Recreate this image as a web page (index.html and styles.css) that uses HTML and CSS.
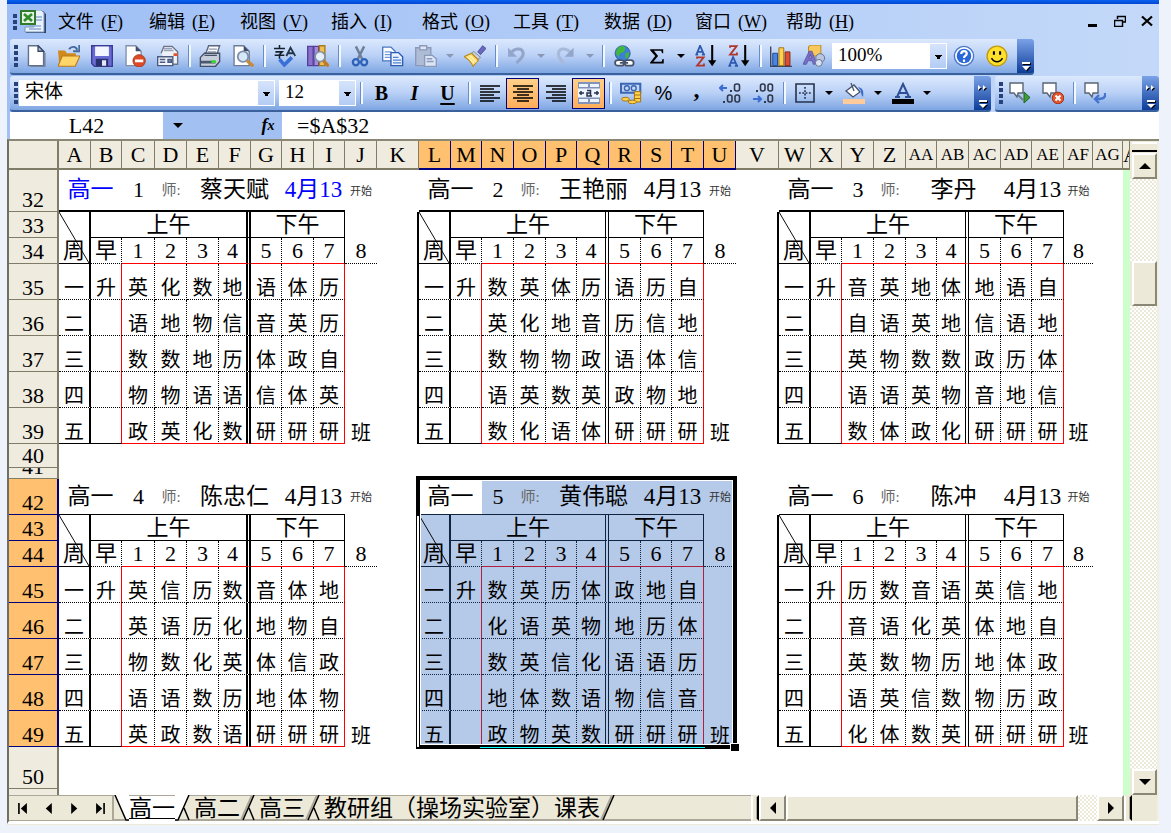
FILE: index.html
```html
<!DOCTYPE html>
<html lang="zh-CN">
<head>
<meta charset="utf-8">
<title>课表</title>
<link rel="stylesheet" href="styles.css">
</head>
<body>
<div class="window">
  <div class="title-edge"></div>

  <header class="menubar">
    <span class="grip"></span>
    <svg class="app-icon" viewBox="0 0 26 24"><path d="M16 1h7l3 3v19H6v-5h10z" fill="#2c4468"/><path d="M14 0h7l3 3v19H5v-5h9z" fill="#e9f1fc" stroke="#7d97bd"/><path d="M15 7h7M15 10h7M9 16h12M9 19h12" stroke="#8fa9d0" stroke-width="1.5"/><path d="M1 1h14v13H1z" fill="#e6f2e2" stroke="#2f7a2b" stroke-width="2"/><path d="M4 4l8 7M12 4l-8 7" stroke="#2f8a2b" stroke-width="2.6"/></svg>
    <nav class="menus">
      <button>文件<span>(<u>F</u>)</span></button><button>编辑<span>(<u>E</u>)</span></button><button>视图<span>(<u>V</u>)</span></button><button>插入<span>(<u>I</u>)</span></button><button>格式<span>(<u>O</u>)</span></button><button>工具<span>(<u>T</u>)</span></button><button>数据<span>(<u>D</u>)</span></button><button>窗口<span>(<u>W</u>)</span></button><button>帮助<span>(<u>H</u>)</span></button>
    </nav>
    <div class="win-buttons">
      <button aria-label="最小化"><svg viewBox="0 0 12 12"><path d="M1 9h9v3H1z"/></svg></button>
      <button aria-label="还原"><svg viewBox="0 0 12 12"><path d="M3.500 4V1.500h8V7H9M3 1.500h9M.5 5.500h8v6h-8zM0 5.500h9" fill="none" stroke="#000" stroke-width="1.500"/></svg></button>
      <button aria-label="关闭"><svg viewBox="0 0 12 12"><path d="M1 1.500l10 9M11 1.500l-10 9" stroke="#000" stroke-width="2.200"/></svg></button>
    </div>
  </header>

  <div class="bars">
    <div class="toolbar standard">
      <span class="grip"></span>
      <button aria-label="新建"><svg viewBox="0 0 16 16"><path d="M4 2h7l4 4v10H4z" fill="#7d8aa3"/><path d="M2.500.5h7l4 4v10.500h-11z" fill="#fff" stroke="#5f6f8c"/><path d="M9.500.5v4h4z" fill="#b9c6dc" stroke="#3a4a68"/></svg></button>
      <button aria-label="打开"><svg viewBox="0 0 16 16"><path d="M0 4h5l1.500 2H13v9H1z" fill="#d08a1c"/><path d="M3 8h13l-3.500 7.500H0z" fill="#ffd568" stroke="#b9791a" stroke-width=".8"/><path d="M8 3c2-2.500 5-2 6 .5M15.500 0v4.500H11" fill="none" stroke="#456a9e" stroke-width="1.400"/></svg></button>
      <button aria-label="保存"><svg viewBox="0 0 16 16"><path d="M.5.5h15v15h-13l-2-2z" fill="#6a6ad4" stroke="#3b3a94"/><path d="M3 1h10v7H3z" fill="#f3f5ff"/><path d="M3.500 10h9v5.500h-9z" fill="#28306e"/><path d="M8 11h3v4H8z" fill="#e4e8f8"/></svg></button>
      <button aria-label="权限"><svg viewBox="0 0 16 16"><path d="M1.500.5h7l4 4V15h-11z" fill="#fff" stroke="#8090ac"/><path d="M8.500.5v4h4z" fill="#3c4c6c"/><circle cx="11" cy="11.500" r="4.500" fill="#dc4a26" stroke="#a43218" stroke-width=".6"/><path d="M8 10.500h6v2H8z" fill="#fff"/></svg></button>
      <button aria-label="邮件"><svg viewBox="0 0 16 16"><path d="M3 6l2-5h6l4 4v9H8" fill="#eef1f7" stroke="#6b7488"/><path d="M5 4h7M5 2.500h6" stroke="#98a2b8"/><path d="M12 6h3v2h-3z" fill="#e2552c"/><path d="M.5 8.500h11v6.500H.5z" fill="#f2f5fc" stroke="#4a5a80"/><path d="M2 10.500h4M2 12.500h4M8 10.500h2.500v2H8z" stroke="#4a5a80" fill="#7c94c8"/></svg></button>
      <i class="sep"></i>
      <button aria-label="打印"><svg viewBox="0 0 16 16"><path d="M5 6l2-5.500h8L13 7z" fill="#fff" stroke="#5a6580"/><path d="M7 3h6M6.500 5h6" stroke="#8a94ac"/><path d="M1 9l3-3h11v6l-3 3.500H1z" fill="#c7cfdd" stroke="#454f66"/><path d="M1 11.500h11v2H1z" fill="#4c5870"/><path d="M9 11h3v2H9z" fill="#2fe01e"/><path d="M4 7.500h9" stroke="#454f66"/></svg></button>
      <button aria-label="打印预览"><svg viewBox="0 0 16 16"><path d="M1.500.5h7l4 4V15h-11z" fill="#fff" stroke="#6d7c98"/><path d="M8.500.5v4h4z" fill="#3c4c6c"/><circle cx="8" cy="8.500" r="3.800" fill="#d5e8f8" stroke="#7f8ea8" stroke-width="1.300"/><path d="M11 11.500l4.500 4" stroke="#c58a3a" stroke-width="2.400"/></svg></button>
      <i class="sep"></i>
      <button aria-label="拼写检查"><svg viewBox="0 0 16 16"><path d="M0 2.500h8M4 0v2M1 5h5L4 7v3M.5 7.500h7" fill="none" stroke="#14202e" stroke-width="1.100"/><path d="M9 8l3-6 3.500 6M10 6h4.500" fill="none" stroke="#24344a" stroke-width="1.300"/><path d="M4 10.500l3.500 4L13 9" fill="none" stroke="#3b6fd8" stroke-width="2.600"/></svg></button>
      <button aria-label="信息检索"><svg viewBox="0 0 16 16"><path d="M.5 1h4v14h-4z" fill="#8a72cc" stroke="#54409a"/><path d="M5 1h3.500v14H5z" fill="#a48ae0" stroke="#54409a"/><path d="M9 .5h4V15H9z" fill="#f0c050" stroke="#a87a1c"/><circle cx="9.500" cy="8.500" r="3.600" fill="#e5f0fa" stroke="#8290a6" stroke-width="1.200"/><path d="M12 11.500l3.800 4" stroke="#c27a28" stroke-width="2.400"/></svg></button>
      <i class="sep"></i>
      <button aria-label="剪切"><svg viewBox="0 0 16 16"><path d="M5 1l4.500 9M11 1l-4.500 9" stroke="#6f7f98" stroke-width="1.800"/><circle cx="5" cy="12.500" r="2.200" fill="none" stroke="#2f62b8" stroke-width="1.700"/><circle cx="11" cy="12.500" r="2.200" fill="none" stroke="#2f62b8" stroke-width="1.700"/></svg></button>
      <button aria-label="复制"><svg viewBox="0 0 16 16"><path d="M.5 1.500h6l3 3v7h-9z" fill="#fff" stroke="#4a78c4"/><path d="M2 5h5M2 7h5M2 9h5" stroke="#6f98dc"/><path d="M6.500 5.500h5.500l3 3V15H6.500z" fill="#eaf2ff" stroke="#2c5cb0"/><path d="M8 9h4M8 11h6M8 13h6" stroke="#4f7fd0"/></svg></button>
      <button aria-label="粘贴" disabled><svg viewBox="0 0 16 16"><path d="M.5 2h11v13H.5z" fill="#aebcd6" stroke="#8c9aba"/><path d="M3.500.5h5v3h-5z" fill="#dfe6f3" stroke="#8c9aba"/><path d="M7 7.500h5.500l3 2.500v5.500H7z" fill="#dbe4f4" stroke="#8c9aba"/><path d="M8.500 10h4M8.500 12h5" stroke="#8c9aba"/></svg></button>
      <button class="drop dim" aria-label="粘贴选项"></button>
      <button aria-label="格式刷"><svg viewBox="0 0 16 16"><path d="M10 5l3.500-4.500L16 2.500 12 7z" fill="#6a68c0" stroke="#4a4890" stroke-width=".6"/><path d="M7 4.500l5 4.500-2 1.500-4.500-4z" fill="#c8cede" stroke="#7a8298" stroke-width=".6"/><path d="M5.500 6l5 5-4 4.500C5 12 3 10 0 8.500z" fill="#ffd968" stroke="#b88a20" stroke-width=".8"/><path d="M2.500 8.500l5 5M4 7.500l5 5" stroke="#fff3b0"/></svg></button>
      <i class="sep"></i>
      <button aria-label="撤消" disabled><svg viewBox="0 0 16 16"><path d="M3 6.500C6 2 12 1.500 12.500 6c.2 3-2.500 5-5 7" fill="none" stroke="#93a5cb" stroke-width="2.200"/><path d="M1.500 2v6.500H8z" fill="#93a5cb"/></svg></button>
      <button class="drop dim" aria-label="撤消选项"></button>
      <button aria-label="恢复" disabled><svg viewBox="0 0 16 16"><path d="M12 6.500C9 2 3 1.500 2.500 6c-.2 3 1.500 5 4 7" fill="none" stroke="#a9b9da" stroke-width="2.200"/><path d="M13.500 2v6.500H7z" fill="#93a5cb"/></svg></button>
      <button class="drop dim" aria-label="恢复选项"></button>
      <i class="sep"></i>
      <button aria-label="超链接"><svg viewBox="0 0 16 16"><circle cx="7" cy="6" r="5.500" fill="#3d7fd6" stroke="#2a5aa4" stroke-width=".6"/><path d="M3 3c2-3 5-2.500 6-1l-1 3-3 1-1 3-2-3zM9 6l3-1-1 4-2 1z" fill="#42b83a"/><rect x="1.500" y="11" width="6.500" height="4" rx="2" fill="#fff" stroke="#47536c" stroke-width="1.300"/><rect x="8.500" y="11" width="6.500" height="4" rx="2" fill="#fff" stroke="#47536c" stroke-width="1.300"/><path d="M5 13h6" stroke="#47536c" stroke-width="1.400"/></svg></button>
      <button aria-label="自动求和"><svg viewBox="0 0 16 16"><path d="M3 3h9.500v3h-.8L11 4.200H5.800L8.800 8l-3.500 4.200h6l.8-2h.8V13.500H3v-.8L6.700 8 3 3.800z" fill="#000"/></svg></button>
      <button class="drop" aria-label="求和选项"></button>
      <button aria-label="升序"><svg viewBox="0 0 16 16"><path d="M1 7l2.700-6.500L6.500 7M2 5h3.500M.3 7h2M5 7h2.300" fill="none" stroke="#2f58ae" stroke-width="1.300"/><path d="M1.500 10V9h4.800L1.500 15h5v-1.500" fill="none" stroke="#b0362c" stroke-width="1.300"/><path d="M12.500 0v14" stroke="#000" stroke-width="1.500"/><path d="M9.500 11h6l-3 4.500z"/></svg></button>
      <button aria-label="降序"><svg viewBox="0 0 16 16"><path d="M1.500 2V.8h4.800L1.500 7h5V5.500" fill="none" stroke="#b0362c" stroke-width="1.300"/><path d="M1 15.200l2.700-6.500 2.800 6.500M2 13h3.500M.3 15.200h2M5 15.200h2.300" fill="none" stroke="#2f58ae" stroke-width="1.300"/><path d="M12.500 0v14" stroke="#000" stroke-width="1.500"/><path d="M9.500 11h6l-3 4.500z"/></svg></button>
      <i class="sep"></i>
      <button aria-label="图表向导"><svg viewBox="0 0 16 16"><path d="M.5 1v14.500H16" fill="none" stroke="#3c4660"/><path d="M2 6h3.500v9H2z" fill="#4a86e0" stroke="#1d4890" stroke-width=".7"/><path d="M6.500 2H10v13H6.500z" fill="#ffcf50" stroke="#a27410" stroke-width=".7"/><path d="M11 5h3.500v10H11z" fill="#dc5030" stroke="#8c2410" stroke-width=".7"/></svg></button>
      <button aria-label="绘图"><svg viewBox="0 0 16 16"><path d="M4 1l2-1h7v7l-2 1H4z" fill="#f8c85c" stroke="#b88424" stroke-width=".7"/><path d="M0 14L4.500 4.500h2L10 14H7.500l-.8-2.500H3.500L2.500 14zM4.300 9.500h2l-1-2.500z" fill="#7a70c8" stroke="#4c4494" stroke-width=".5"/><circle cx="12.500" cy="9.500" r="3.200" fill="#b9c6de" stroke="#66748e" stroke-width=".7"/><circle cx="11.500" cy="13" r="2.500" fill="#d8e2f2" stroke="#66748e" stroke-width=".7"/></svg></button>
      <select class="combo zoom" aria-label="显示比例"><option>100%</option></select>
      <button aria-label="帮助"><svg viewBox="0 0 16 16"><circle cx="8" cy="8" r="7" fill="#fff" stroke="#4a78c8"/><circle cx="8" cy="8" r="5.300" fill="#2a68d8"/><path d="M6 6.500C6 3.800 10 4 10 6.300 10 7.800 8 7.600 8 9.500M8 10.500v1.800" fill="none" stroke="#fff" stroke-width="1.600"/></svg></button>
      <button aria-label="笑脸"><svg viewBox="0 0 16 16"><circle cx="8" cy="8" r="7.200" fill="#ffe02a" stroke="#c49a10"/><path d="M5 4.500h1.500v2.500H5zM9.500 4.500H11v2.500H9.500z"/><path d="M4 9.500c2 3.500 6 3.500 8 0" fill="none" stroke="#000" stroke-width="1.100"/></svg></button>
      <button class="cap" aria-label="工具栏选项"><svg viewBox="0 0 10 10"><path d="M1 1h8v2H1zM1 5h8L5 9.500z"/></svg></button>
    </div>

    <div class="row2">
      <div class="toolbar format">
        <span class="grip"></span>
        <select class="combo font" aria-label="字体"><option>宋体</option></select>
        <select class="combo size" aria-label="字号"><option>12</option></select>
        <i class="sep"></i>
        <button class="letter b">B</button><button class="letter i">I</button><button class="letter u">U</button>
        <i class="sep"></i>
        <button aria-label="左对齐"><svg viewBox="0 0 22 22"><path d="M1 4h20M1 7h14M1 10h20M1 13h14M1 16h20M1 19h14" stroke="#000" stroke-width="1.500"/></svg></button>
        <button class="on" aria-label="居中"><svg viewBox="0 0 22 22"><path d="M1 4h20M5 7h12M1 10h20M5 13h12M1 16h20M5 19h12" stroke="#000" stroke-width="1.500"/></svg></button>
        <button aria-label="右对齐"><svg viewBox="0 0 22 22"><path d="M1 4h20M7 7h14M1 10h20M7 13h14M1 16h20M7 19h14" stroke="#000" stroke-width="1.500"/></svg></button>
        <button class="on" aria-label="合并及居中"><svg viewBox="0 0 22 22"><path d="M0 0h22v22H0z" fill="#8193b8"/><path d="M1 2h9v3H1zM12 2h9v3h-9zM1 17h9v3H1zM12 17h9v3h-9zM0 6.500h22v9H0z" fill="#eef4ff"/><path d="M1 11h5M3 9v4M16 11h5M19 9v4M9 8.500h3.500V14M12.500 11H9v3h5" fill="none" stroke="#26324c" stroke-width="1.500"/></svg></button>
        <i class="sep"></i>
        <button aria-label="货币样式"><svg viewBox="0 0 16 16"><path d="M0 .5h15.500v8H0z" fill="#3b66b4"/><path d="M1.500 2H14v5H1.500z" fill="#c3d6f4"/><circle cx="5" cy="4.500" r="1.800" fill="none" stroke="#3b66b4"/><circle cx="10" cy="4.500" r="1.800" fill="none" stroke="#3b66b4"/><path d="M10.500 7h4.500v7.500h-4.500z" fill="#ffd24a" stroke="#a47210" stroke-width=".7"/><path d="M10.500 9.500H15M10.500 12H15" stroke="#a47210" stroke-width=".8"/><ellipse cx="4" cy="12.500" rx="2.800" ry="1.400" fill="#ffd24a" stroke="#a47210" stroke-width=".7"/><ellipse cx="9" cy="14.500" rx="3" ry="1.300" fill="#ffd24a" stroke="#a47210" stroke-width=".7"/></svg></button>
        <button class="letter pct">%</button>
        <button class="letter comma">,</button>
        <button aria-label="增加小数位数"><svg viewBox="0 0 22 22"><path d="M8 6H1M4 3L1 6l3 3" fill="none" stroke="#3b6cd0" stroke-width="2"/><g fill="none" stroke="#30384a" stroke-width="1.600"><rect x="15.500" y="2" width="5" height="7" rx="2"/><rect x="8.500" y="13" width="4.500" height="7" rx="2"/><rect x="16" y="13" width="4.500" height="7" rx="2"/></g><path d="M11 8h2v2h-2zM4 19h2v2H4z" fill="#30384a"/></svg></button>
        <button aria-label="减少小数位数"><svg viewBox="0 0 22 22"><path d="M1 17h8M6 14l3 3-3 3" fill="none" stroke="#3b6cd0" stroke-width="2"/><g fill="none" stroke="#30384a" stroke-width="1.600"><rect x="8.500" y="2" width="4.500" height="7" rx="2"/><rect x="16" y="2" width="4.500" height="7" rx="2"/><rect x="16" y="13" width="4.500" height="7" rx="2"/></g><path d="M4 8h2v2H4zM12 19h2v2h-2z" fill="#30384a"/></svg></button>
        <i class="sep"></i>
        <button aria-label="边框"><svg viewBox="0 0 22 22"><path d="M2 2h18v18H2z" fill="none" stroke="#26324c" stroke-width="1.600"/><path d="M11 5v13M5 11h13" stroke="#26324c" stroke-width="1.600" stroke-dasharray="1.800 1.500"/></svg></button>
        <button class="drop" aria-label="边框选项"></button>
        <button aria-label="填充颜色"><svg viewBox="0 0 22 22"><path d="M3 9l8-6 6 7-7 5z" fill="#fff" stroke="#45536e" stroke-width="1.300"/><path d="M8 1l3 8" stroke="#45536e" stroke-width="1.300"/><path d="M15 5c5 1 6 4 5 10-2-2-2-4-2-6" fill="#3b6cd0"/><path d="M0 17h22v5H0z" fill="#ffcb9b"/></svg></button>
        <button class="drop" aria-label="填充颜色选项"></button>
        <button aria-label="字体颜色"><svg viewBox="0 0 22 22"><path d="M5 15L11 2l6 13M7 11h7.500M3 15h5M13 15h6" fill="none" stroke="#2d4f94" stroke-width="2"/><path d="M0 17h22v5H0z"/></svg></button>
        <button class="drop" aria-label="字体颜色选项"></button>
        <button class="cap" aria-label="工具栏选项"><svg viewBox="0 0 10 24"><path d="M0 1l3 2.500L0 6zM5 1l3 2.500L5 6zM1 16h8v2H1zM1 20h8l-4 4z"/></svg></button>
      </div>
      <div class="toolbar review">
        <span class="grip"></span>
        <button aria-label="答复"><svg viewBox="0 0 22 22"><path d="M1 1h13v10H9l-1 4-3-4H1z" fill="#fff" stroke="#5a6474" stroke-width="1.400"/><path d="M9 13l5 5" stroke="#707a8c" stroke-width="2"/><path d="M15 10l6 5.500-6 5.500z" fill="#3f9a3a" stroke="#1f6420"/></svg></button>
        <button aria-label="结束审阅"><svg viewBox="0 0 22 22"><path d="M1 1h13v10H9l-1 4-3-4H1z" fill="#fff" stroke="#5a6474" stroke-width="1.400"/><circle cx="16" cy="16" r="5.800" fill="#e2532e" stroke="#a43218"/><path d="M13.500 13.500l5 5M18.500 13.500l-5 5" stroke="#fff" stroke-width="2"/></svg></button>
        <i class="sep"></i>
        <button aria-label="更改"><svg viewBox="0 0 22 22"><path d="M1 1h13v10H9l-1 4-3-4H1z" fill="#fff" stroke="#5a6474" stroke-width="1.400"/><path d="M21 11c1 5-2 6-9 6M15 13l-4 4 4 4" fill="none" stroke="#4474cc" stroke-width="2.400"/></svg></button>
        <button class="cap" aria-label="工具栏选项"><svg viewBox="0 0 10 24"><path d="M0 1l3 2.500L0 6zM5 1l3 2.500L5 6zM1 16h8v2H1zM1 20h8l-4 4z"/></svg></button>
      </div>
    </div>
  </div>

  <div class="formula-bar">
    <input class="name-box" aria-label="名称框" value="L42">
    <button class="drop name-drop" aria-label="名称列表"></button>
    <button class="fx" aria-label="插入函数">f<sub>x</sub></button>
    <input class="formula" aria-label="编辑栏" value="=$A$32">
  </div>

  <main class="book">
    <div class="sheet"><table class="grid" id="grid"></table></div>
    <div class="vscroll">
      <span class="split"></span>
      <button class="raised arrow" aria-label="向上"><svg viewBox="0 0 14 8"><path d="M7 1l6 6H1z"/></svg></button>
      <span class="track before"></span>
      <span class="raised thumb"></span>
      <span class="track"></span>
      <button class="raised arrow" aria-label="向下"><svg viewBox="0 0 14 8"><path d="M7 7l6-6H1z"/></svg></button>
    </div>
  </main>

  <footer class="tabbar">
    <div class="tab-nav">
      <button aria-label="第一张"><svg viewBox="0 0 10 10"><path d="M1 0h1.500v10H1zM9 0v10L3.500 5z"/></svg></button>
      <button aria-label="上一张"><svg viewBox="0 0 10 10"><path d="M8 0v10L2.500 5z"/></svg></button>
      <button aria-label="下一张"><svg viewBox="0 0 10 10"><path d="M2 0v10l5.500-5z"/></svg></button>
      <button aria-label="最后一张"><svg viewBox="0 0 10 10"><path d="M7.500 0H9v10H7.500zM1 0v10l5.500-5z"/></svg></button>
    </div>
    <div class="tabs">
      <svg class="edge first" viewBox="0 0 15 26"><path d="M1 0h14v25h-3z" fill="#fff"/><path d="M1 0l11 25h3" fill="none" stroke="#000" stroke-width="1.500"/></svg>
      <button class="tab current">高一</button>
      <svg class="edge" viewBox="0 0 19 26"><path d="M0 0h14L3 25H0z" fill="#fff"/><path d="M14 0L3 25H0M9 13l5 12" fill="none" stroke="#000" stroke-width="1.500"/></svg>
      <button class="tab">高二</button>
      <svg class="edge" viewBox="0 0 19 26"><path d="M12 0L1 25" stroke="#aca899" stroke-width="2"/><path d="M14 0L3 25M9 13l5 12" fill="none" stroke="#000" stroke-width="1.500"/></svg>
      <button class="tab">高三</button>
      <svg class="edge" viewBox="0 0 19 26"><path d="M12 0L1 25" stroke="#aca899" stroke-width="2"/><path d="M14 0L3 25M9 13l5 12" fill="none" stroke="#000" stroke-width="1.500"/></svg>
      <button class="tab">教研组（操场实验室）课表</button>
      <svg class="edge" viewBox="0 0 19 26"><path d="M12 0L1 25" stroke="#aca899" stroke-width="2"/><path d="M14 0L3 25" fill="none" stroke="#000" stroke-width="1.500"/></svg>
    </div>
    <div class="hscroll">
      <span class="handle"></span>
      <button class="raised arrow" aria-label="向左"><svg viewBox="0 0 8 14"><path d="M1 7l6-6v12z"/></svg></button>
      <span class="raised thumb"></span>
      <span class="track"></span>
      <button class="raised arrow" aria-label="向右"><svg viewBox="0 0 8 14"><path d="M7 7L1 1v12z"/></svg></button>
      <span class="handle"></span>
      <span class="corner"></span>
    </div>
  </footer>
</div>
<script src="grid.js"></script>
</body>
</html>
```
FILE: styles.css
```css
* { box-sizing: border-box; }

body {
  margin: 0;
  background: #edf2fb;
  color: #000;
  font-family: "Liberation Serif", "Noto Sans CJK SC", serif;
  font-weight: 400;
}

button, input, select {
  margin: 0;
  padding: 0;
  border: 0;
  border-radius: 0;
  background: none;
  color: inherit;
  font: inherit;
}

button { display: flex; align-items: center; justify-content: center; flex: none; }

.window {
  display: flex;
  flex-direction: column;
  height: calc(100vh - 8px);
  margin: 0 12px 8px 7px;
  background: #fff;
  border-bottom: 1px solid #ece9d8;
}

.title-edge { height: 4px; flex: none; background: linear-gradient(#0a62f0, #0046d2); }

/* menu bar */
.menubar {
  display: flex;
  align-items: center;
  height: 35px;
  flex: none;
  padding: 0 6px;
  background: linear-gradient(90deg, #9ebef5, #c4d9f9);
}

.app-icon { width: 26px; height: 24px; margin-left: 1px; }

.grip {
  flex: none;
  width: 4px;
  height: 22px;
  margin: 0 3px 0 4px;
  background: repeating-linear-gradient(#27417a 0 4px, transparent 4px 6px);
}

.menubar .grip { height: 16px; margin: 0 2px 0 0; }

.menus { display: flex; margin-left: 12px; }
.menus button { width: 91px; justify-content: flex-start; font-size: 18px; line-height: 26px; }
.menus span { margin-left: 7px; }
.menus u { text-underline-offset: 2px; }

.win-buttons { display: flex; gap: 15px; margin-left: auto; padding-bottom: 2px; }
.win-buttons svg { width: 12px; height: 12px; }

/* toolbars */
.bars { flex: none; background: linear-gradient(90deg, #9ebef5, #c4d9f9); }

.toolbar {
  display: flex;
  align-items: center;
  height: 36px;
  border-bottom: 2px solid #3b619c;
  border-radius: 3px;
  background: linear-gradient(#dce9fd, #b9d0f6 50%, #7ea6e2);
  overflow: hidden;
}

.standard { width: 1024px; margin: 0 0 1px 3px; }
.row2 { display: flex; gap: 4px; padding-left: 3px; }
.format { flex: none; width: 981px; }
.review { flex: 1; }

.toolbar .grip { margin: 0 1px 0 4px; }
.toolbar button { width: 33px; height: 31px; }
.toolbar svg { width: 22px; height: 22px; }
.toolbar .format .grip { margin-right: 3px; }
.review .grip { margin-right: 0; }

.sep { flex: none; width: 9px; height: 22px; background: linear-gradient(90deg, transparent 4px, #6a8ccb 4px 5px, #f1f9ff 5px 7px, transparent 7px); }

.toolbar .on { border: 1px solid #000080; background: linear-gradient(#ffd08a, #ffae5a); }

.toolbar .drop { width: 16px; }
.drop::before { content: ""; border: 4px solid transparent; border-top-color: #000; border-bottom: 0; }
.drop.dim::before { border-top-color: #8a97b5; }

.toolbar .cap {
  width: 17px;
  height: 36px;
  margin-left: auto;
  align-items: flex-end;
  padding-bottom: 3px;
  background: linear-gradient(#7ea5ea, #0a3a96);
}
.toolbar .cap svg { width: 10px; height: 10px; fill: #fff; filter: drop-shadow(1px 1px 0 #000); }
.toolbar.format .cap svg, .toolbar.review .cap svg { height: 24px; }

.combo {
  flex: none;
  height: 26px;
  appearance: none;
  background-color: #fff;
  background-image: linear-gradient(#000, #000), linear-gradient(#000, #000), linear-gradient(#000, #000), linear-gradient(#d5e4fb, #b4ccf4);
  background-size: 7px 1px, 5px 1px, 3px 2px, 16px 24px;
  background-position: right 5px top 12px, right 6px top 13px, right 7px top 14px, right 1px top 1px;
  background-repeat: no-repeat;
  padding: 0 4px 3px 6px;
  font-size: 19px;
  line-height: 22px;
}
.zoom { width: 115px; margin-left: 2px; }
.font { width: 256px; }
.size { width: 77px; margin-left: 4px; }

.letter { font-size: 20px; font-weight: 700; }
.letter.i { font-style: italic; }
.letter.u { text-decoration: underline; text-underline-offset: 3px; }
.letter.pct { font: 400 20px "Liberation Sans", sans-serif; }
.letter.comma { font-size: 24px; line-height: 22px; padding-bottom: 8px; }

/* formula bar */
.formula-bar {
  display: flex;
  flex: none;
  height: 27px;
  padding-left: 3px;
  background: #a3c0f3;
  font-size: 22px;
}
.formula-bar input { height: 27px; background: #fff; }
.name-box { width: 153px; text-align: center; }
.name-drop { width: 29px; }
.name-drop::before { border-width: 5px; border-bottom: 0; }
.fx { width: 20px; margin-left: 66px; margin-right: 4px; font-style: italic; font-weight: 700; font-size: 18px; }
.fx sub { font-size: 14px; }
.formula { flex: 1; min-width: 0; padding-left: 15px; }

/* sheet */
.book {
  display: flex;
  flex: 1;
  min-height: 0;
  border-top: 2px solid #8a8775;
  border-left: 2px solid #716f64;
}

.sheet { flex: 1; min-width: 0; overflow: hidden; background: #fff; }

.grid { table-layout: fixed; width: 1121px; border-collapse: separate; border-spacing: 0; }
.w50 { width: 50px; }
.w43 { width: 43px; }
.w42 { width: 42px; }
.w33 { width: 33px; }
.w32 { width: 32px; }
.w31 { width: 31px; }
.w30 { width: 30px; }
.w29 { width: 29px; }
.w7 { width: 7px; }

.h42 { height: 42px; }
.h36 { height: 36px; }
.h29 { height: 29px; }
.h26 { height: 26px; }
.h24 { height: 24px; }
.h11 { height: 11px; }
.h7 { height: 7px; }

.grid th, .grid td { padding: 0; text-align: center; white-space: nowrap; }

.grid th {
  background: #efecdf;
  border: 0 solid #7f7d68;
  font-size: 22px;
  font-weight: 400;
  line-height: 22px;
}
.grid thead th { border-width: 0 1px 2px 0; overflow: hidden; }
.grid thead th.wide { font-size: 17px; }
.grid tbody th { border-width: 0 2px 1px 0; vertical-align: bottom; }
.grid thead th:first-child { border-right-width: 2px; }
.grid th.picked { background: #ffc06f; border-color: #00007f; }

.clip { display: flex; align-items: flex-end; justify-content: center; height: 10px; overflow: hidden; }

.grid td { font-size: 20px; line-height: 22px; vertical-align: bottom; border: 0 solid #000; position: relative; }
.grid .margin { background: #cfc; }

.grid td.title { font-size: 23px; line-height: 24px; vertical-align: middle; }
.grid td.blue { color: #00f; }
.grid td.number { font-size: 22px; vertical-align: middle; line-height: 24px; }
.grid td.teacher { color: #666; font-size: 15px; vertical-align: middle; }
.grid td.start { font-size: 11px; color: #333; vertical-align: middle; }
.grid td.half { font-size: 22px; line-height: 24px; }
.grid td.period { font-size: 22px; line-height: 24px; }
.grid td.corner-cell, .grid td.morning { font-size: 22px; line-height: 24px; }

.grid td.b1 { border-bottom: 1px solid #000; }
.grid td.b2 { border-bottom: 2px solid #000; }
.grid td.bd { border-bottom: 1px dotted #000; }
.grid td.br { border-bottom: 1px solid #f00; }
.grid td.r1 { border-right: 1px solid #000; }
.grid td.r2 { border-right: 2px solid #000; }
.grid td.rd { border-right: 1px dotted #000; }
.grid td.rr { border-right: 1px solid #f00; }
.grid td.r4 { border-right: 4px double #000; }
.grid td.r5 { border-right: 5px double #000; }

.grid td.sel { background: #b5c9e8; border-color: #10243f; }
.grid td.sel.br { border-bottom-color: #b0203f; }
.grid td.sel.rr { border-right-color: #b0203f; }
.grid td.active { background: #fff; }

.diagonal { position: absolute; left: 0; top: 0; width: 100%; height: 100%; }

/* selection frame drawn over the picked range */
.frame {
  position: absolute;
  z-index: 1;
  left: -3px;
  top: -3px;
  width: 321px;
  height: 273px;
  border: 4px solid #000;
  box-shadow: inset 0 0 0 1px #fff;
  pointer-events: none;
}
.frame::before { content: ""; position: absolute; left: -3px; top: 36px; bottom: -2px; width: 2px; background: #fff; }
.frame::after { content: ""; position: absolute; left: 60px; right: 28px; bottom: -3px; height: 1px; background: #0ff; }
.fill-handle { position: absolute; z-index: 2; left: 311px; top: 264px; width: 9px; height: 8px; background: #000; border: solid #fff; border-width: 1px 0 0 1px; }

/* scroll bars */
.raised {
  flex: none;
  background: #ece9d8;
  border: 2px solid;
  border-color: #fff #8a8775 #8a8775 #fff;
}
.track { background: repeating-conic-gradient(#ece9d8 0 25%, #fff 0 50%) 0 0 / 4px 4px; }

.vscroll {
  display: flex;
  flex-direction: column;
  flex: none;
  width: 29px;
  border-right: 2px solid #f1efe2;
  background: #ece9d8;
}
.vscroll .split { height: 10px; flex: none; margin: 1px 0 1px 2px; border-top: 2px solid #fff; border-bottom: 2px solid #000; }
.vscroll .raised { margin-left: 2px; }
.vscroll .arrow { height: 26px; }
.vscroll .thumb { height: 45px; }
.vscroll .track { flex: 1; }
.vscroll .track.before { flex: none; height: 82px; }
.vscroll svg { width: 14px; height: 8px; }

.tabbar {
  display: flex;
  flex: none;
  height: 29px;
  border-left: 2px solid #716f64;
  background: #ece9d8;
  border-bottom: 3px solid #fff;
}
.tab-nav { display: flex; align-items: center; width: 105px; border-right: 2px solid #aca899; border-top: 1px solid #aca899; border-bottom: 1px solid #aca899; }
.tab-nav button { width: 26px; height: 22px; }
.tab-nav svg { width: 11px; height: 11px; }

.tabs { display: flex; flex: 1; min-width: 0; border-top: 1px solid #aca899; border-bottom: 2px solid #aca899; }
.edge { flex: none; width: 19px; height: 26px; margin: -1px 0; }
.edge.first { width: 15px; }
.tab { font-size: 23px; line-height: 23px; height: 24px; }
.tab.current { background: #fff; height: 25px; text-decoration: underline; text-underline-offset: 2px; text-decoration-thickness: 1px; }

.hscroll { display: flex; flex: none; width: 408px; }
.handle { flex: none; width: 8px; border: 2px solid; border-color: #ece9d8 #000 #ece9d8 #fff; box-shadow: inset -1px 0 #aca899; }
.hscroll .arrow { width: 27px; }
.hscroll .thumb { flex: 1; }
.hscroll .track { width: 19px; flex: none; }
.hscroll svg { width: 8px; height: 14px; }
.corner { flex: none; width: 27px; border-right: 2px solid #f1efe2; }
```
FILE: grid.js
```javascript
const columns = [
  ["", 50], ["A", 32], ["B", 31], ["C", 33], ["D", 32], ["E", 32], ["F", 32], ["G", 31], ["H", 32], ["I", 31], ["J", 32], ["K", 42],
  ["L", 32], ["M", 31], ["N", 32], ["O", 32], ["P", 31], ["Q", 32], ["R", 32], ["S", 31], ["T", 32], ["U", 32], ["V", 43],
  ["W", 32], ["X", 31], ["Y", 32], ["Z", 32], ["AA", 31], ["AB", 32], ["AC", 32], ["AD", 31], ["AE", 32], ["AF", 29], ["AG", 30], ["A", 7]
];

const groups = [
  [
    { no: 1, name: "蔡天赋", blue: true, rows: ["英化数地语体历", "语地物信音英历", "数数地历体政自", "物物语语信体英", "政英化数研研研"] },
    { no: 2, name: "王艳丽", rows: ["数英体历语历自", "英化地音历信地", "数物物政语体信", "语英数英政物地", "数化语体研研研"] },
    { no: 3, name: "李丹", rows: ["音英地体地语自", "自语英地信语地", "英物数数政历体", "语语英物音地信", "数体政化研研研"] }
  ],
  [
    { no: 4, name: "陈忠仁", rows: ["英信历数音体地", "英语历化地物自", "物数化英体信政", "语语数历地体物", "英政数语研研研"] },
    { no: 5, name: "黄伟聪", picked: true, rows: ["数英历体政地自", "化语英物地历体", "数英信化语语历", "地体数语物信音", "政物英数研研研"] },
    { no: 6, name: "陈冲", rows: ["历数音语英信地", "音语化英体地自", "英数物历地体政", "语英信数物历政", "化体数英研研研"] }
  ]
];

const days = "一二三四五";
const diagonal = '<svg class="diagonal" viewBox="0 0 32 52" preserveAspectRatio="none"><path d="M0 0L32 52" stroke="#000" stroke-width="1"/></svg>';

function cell(text, classes, attrs = "") {
  return `<td class="${classes}" ${attrs}>${text}</td>`;
}

/* One timetable's cells for one sheet row; line 0 is the title, 1-2 the heads, 3-7 the days. */
function timetable(t, line, thick, index) {
  const s = t.picked ? " sel" : "";
  const twin = index === 0 ? "r5" : "r4";
  const top = thick ? " b2" : " b1";
  const blue = t.blue ? " blue" : "";
  if (line === 0) {
    const frame = t.picked ? '<span class="frame"></span><span class="fill-handle"></span>' : "";
    return cell("高一" + frame, "title" + blue + top + s + (t.picked ? " active" : ""), 'colspan="2"') +
      cell(t.no, "number" + top + s) + cell("师:", "teacher" + top + s) +
      cell(t.name, "title" + top + s, 'colspan="3"') +
      cell("4月13", "title" + blue + top + s, 'colspan="2"') + cell("开始", "start" + s);
  }
  if (line === 1) {
    return cell("周" + diagonal, "corner-cell b1 r2" + s, 'rowspan="2"') +
      cell("上午", `half b1 ${twin}` + s, 'colspan="5"') +
      cell("下午", "half b1 r1" + s, 'colspan="3"') + cell("", s);
  }
  if (line === 2) {
    let out = cell("早", "morning bd rd" + s);
    for (let p = 1; p <= 7; p++) {
      out += cell(p, `period br ${p === 4 ? twin : p === 7 ? "r1" : "rd"}` + s);
    }
    return out + cell(8, "period bd" + s);
  }
  const day = line - 3;
  const last = day === 4;
  const side = last ? "b1" : "bd";
  let out = cell(days[day], `${side} r2` + s) + cell(day === 0 ? "升" : "", `${side} rr` + s);
  [...t.rows[day]].forEach((lesson, p) => {
    out += cell(lesson, `${last ? "br" : "bd"} ${p === 3 ? twin : p === 6 ? "rr" : "rd"}` + s);
  });
  return out + cell(last ? "班" : "", s);
}

function row(number, height, body) {
  const picked = number >= 42 && number <= 49 ? "picked" : "";
  const label = number === 41 ? `<div class="clip">${number}</div>` : number || "";
  return `<tr class="h${height}"><th scope="row" class="${picked}">${label}</th>${body}<td class="margin"></td></tr>`;
}

const blank = cell("", "", 'colspan="33"');
const heights = [42, 26, 26, 36, 36, 36, 36, 36];

function groupRows(group, first) {
  return heights.map((h, line) => {
    const height = line === 0 && first === 42 ? 36 : h;
    const edge = line > 0 ? "r2" : "";
    const body = group.map((t, i) =>
      timetable(t, line, first === 32, i) + cell("", i < 2 ? edge : "")
    ).join("");
    return row(first + line, height, body);
  }).join("");
}

const heads = columns.map(([name], i) => {
  const picked = i >= 12 && i <= 21 ? "picked" : "";
  const wide = name.length > 1 ? "wide" : "";
  return `<th scope="col" class="${picked} ${wide}">${name}</th>`;
}).join("");

document.getElementById("grid").innerHTML =
  `<colgroup>${columns.map(([, w]) => `<col class="w${w}">`).join("")}</colgroup>` +
  `<thead><tr class="h29">${heads}</tr></thead><tbody>` +
  groupRows(groups[0], 32) + row(40, 24, blank) + row(41, 11, blank) +
  groupRows(groups[1], 42) + row(50, 42, blank) + row("", 7, blank) + "</tbody>";
```
